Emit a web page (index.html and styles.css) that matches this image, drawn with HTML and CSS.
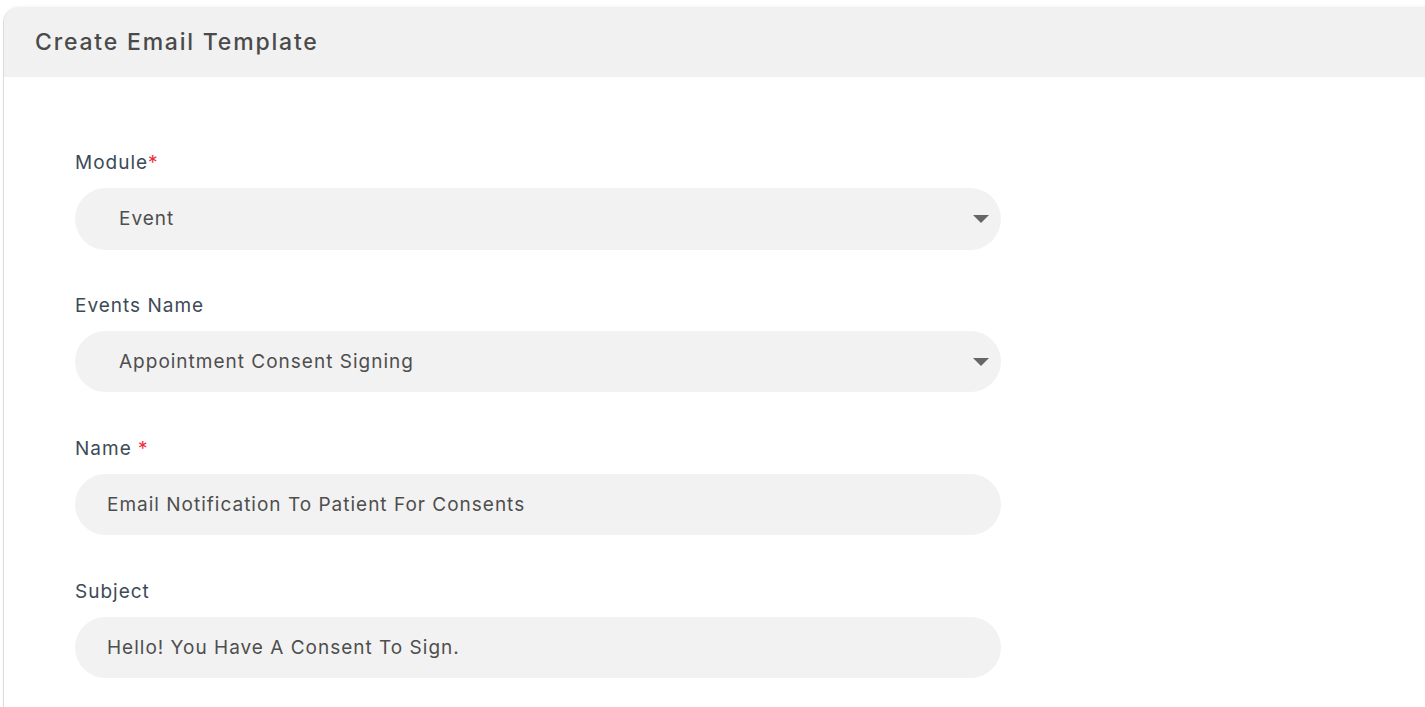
FILE: index.html
```html
<!DOCTYPE html>
<html>
<head>
<meta charset="utf-8">
<link rel="stylesheet" href="styles.css">
</head>
<body>
<div class="card">
  <div class="card-header">
    <h1 class="title">Create Email Template</h1>
  </div>
  <div class="card-body">
    <div class="field">
      <label class="label">Module<span class="req">*</span></label>
      <div class="control select">
        <span class="value">Event</span>
        <span class="caret"></span>
      </div>
    </div>
    <div class="field">
      <label class="label">Events Name</label>
      <div class="control select">
        <span class="value">Appointment Consent Signing</span>
        <span class="caret"></span>
      </div>
    </div>
    <div class="field">
      <label class="label">Name <span class="req">*</span></label>
      <div class="control input">
        <span class="value">Email Notification To Patient For Consents</span>
      </div>
    </div>
    <div class="field">
      <label class="label">Subject</label>
      <div class="control input">
        <span class="value">Hello! You Have A Consent To Sign.</span>
      </div>
    </div>
  </div>
</div>
</body>
</html>
```
FILE: styles.css
```css
html, body {
  margin: 0;
  padding: 0;
  background: #ffffff;
  height: 100%;
  overflow: hidden;
}
body {
  font-family: "Inter", "Open Sans", sans-serif;
  padding: 7px 0 0 3px;
  box-sizing: border-box;
}
.card {
  border-left: 1px solid #dcdcdc;
  border-top-left-radius: 16px;
  height: 100%;
  box-shadow: 0 -1px 3px rgba(0,0,0,0.04);
}
.card-header {
  background: #f1f1f1;
  height: 70px;
  border-top-left-radius: 16px;
  display: flex;
  align-items: center;
  padding-left: 31px;
}
.title {
  margin: 0;
  font-size: 23px;
  font-weight: 500;
  color: #4a4a4a;
  letter-spacing: 1.8px;
}
.card-body {
  padding: 73px 0 0 71px;
}
.field {
  display: flex;
  flex-direction: column;
  align-items: flex-start;
  width: 926px;
  margin-bottom: 43.4px;
}
.label {
  font-size: 19px;
  line-height: 26px;
  color: #3d4a57;
  margin-bottom: 12px;
  letter-spacing: 1px;
}
.req {
  color: #ef2b36;
}
.control {
  align-self: stretch;
  height: 61.5px;
  background: #f2f2f2;
  border-radius: 31px;
  display: flex;
  align-items: center;
  box-sizing: border-box;
  font-size: 19px;
  color: #4e4e4e;
  letter-spacing: 1px;
}
.select {
  padding: 0 12px 0 44px;
  justify-content: space-between;
}
.input {
  padding-left: 32px;
}
.caret {
  width: 0;
  height: 0;
  border-left: 8px solid transparent;
  border-right: 8px solid transparent;
  border-top: 8px solid #666666;
}
```
